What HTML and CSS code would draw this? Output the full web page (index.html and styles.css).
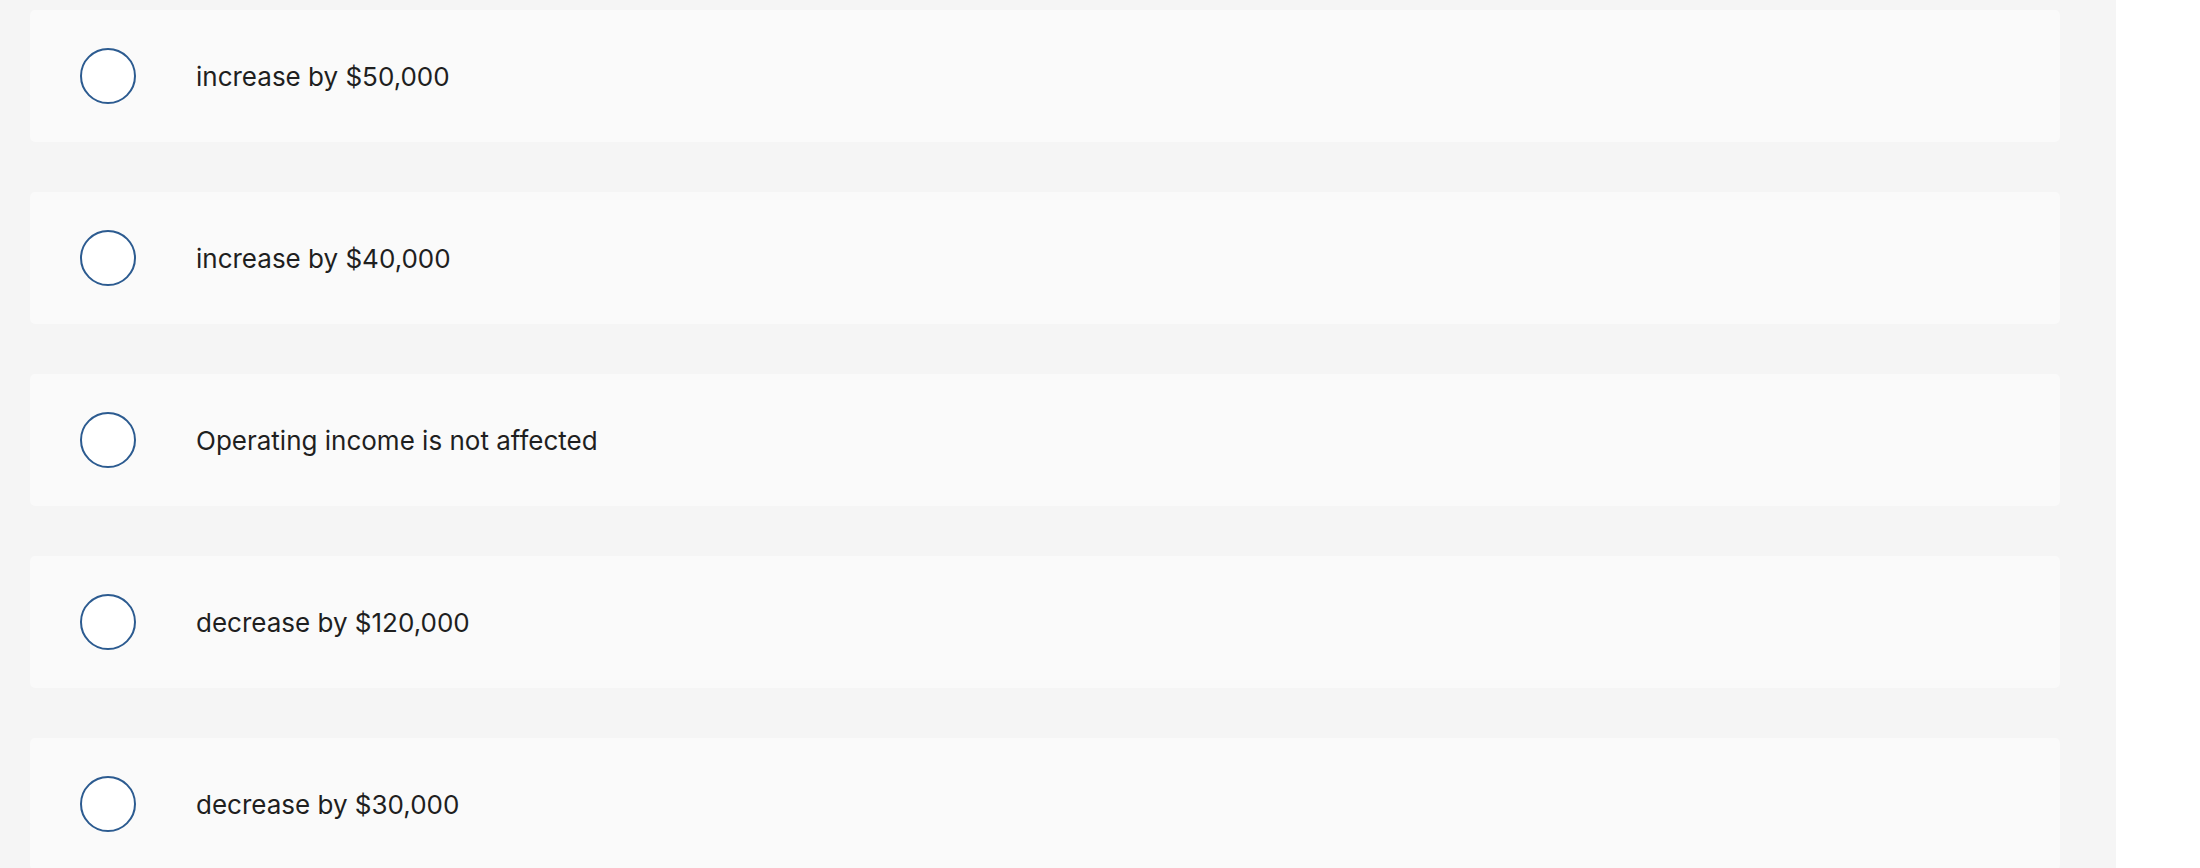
FILE: index.html
```
<!DOCTYPE html>
<html lang="en">
  <head>
    <meta charset="UTF-8" />
    <meta name="viewport" content="width=device-width, initial-scale=1.0" />
    <title>Question</title>
    <link rel="stylesheet" href="styles.css">
  </head>
  <body>
    <div class="panel">
      <div class="choices">
        <label class="choice">
          <span class="radio"></span>
          <span class="choice-text">increase by $50,000</span>
        </label>
        <label class="choice">
          <span class="radio"></span>
          <span class="choice-text">increase by $40,000</span>
        </label>
        <label class="choice">
          <span class="radio"></span>
          <span class="choice-text">Operating income is not affected</span>
        </label>
        <label class="choice">
          <span class="radio"></span>
          <span class="choice-text">decrease by $120,000</span>
        </label>
        <label class="choice">
          <span class="radio"></span>
          <span class="choice-text">decrease by $30,000</span>
        </label>
      </div>
    </div>
  </body>
</html>
```

FILE: styles.css
```
* {
  margin: 0;
  padding: 0;
  box-sizing: border-box;
}

body {
  font-family: Inter, "Open Sans", sans-serif;
  background: #ffffff;
  height: 100vh;
  overflow: hidden;
}

.panel {
  width: 2116px;
  height: 100%;
  background: #f5f5f5;
  padding: 10px 56px 0 30px;
}

.choices {
  display: flex;
  flex-direction: column;
  gap: 50px;
}

.choice {
  display: flex;
  align-items: center;
  height: 132px;
  flex-shrink: 0;
  padding-left: 50px;
  background: #fafafa;
  border-radius: 5px;
  cursor: pointer;
}

.radio {
  width: 56px;
  height: 56px;
  border: 2px solid #2c5b90;
  border-radius: 50%;
  background: #ffffff;
  flex-shrink: 0;
}

.choice-text {
  margin-left: 60px;
  font-size: 26px;
  color: #1f1f1f;
}
```
